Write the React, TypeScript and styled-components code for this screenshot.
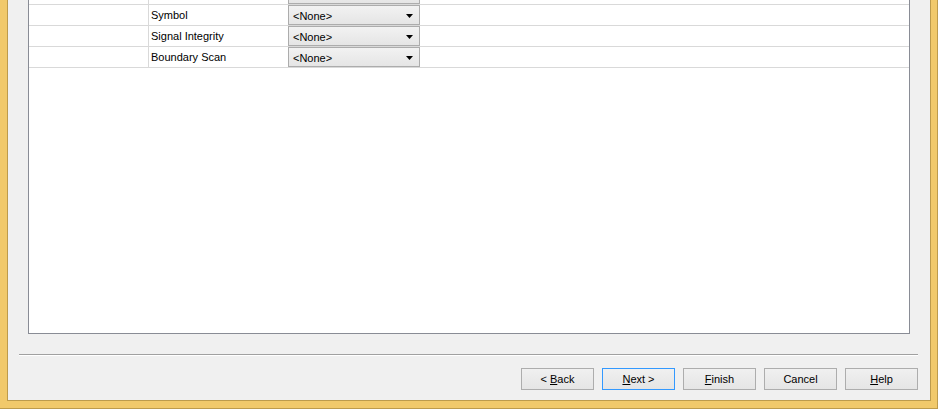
import React from "react";
import styled, { createGlobalStyle } from "styled-components";

const Global = createGlobalStyle`
  html, body { margin: 0; padding: 0; background: #f1c96b; }
  body { font-family: "Liberation Sans", Arial, sans-serif; font-size: 11px; color: #000; }
  * { box-sizing: border-box; }
`;

const Frame = styled.div`
  width: 938px;
  height: 409px;
  background: #f1c96b;
  border-right: 1px solid #bd9b4c;
  border-bottom: 1px solid #bd9b4c;
  padding: 0 6px 7px 7px;
`;

const Window = styled.div`
  width: 100%;
  height: 100%;
  background: #f0f0f0;
  border-left: 1px solid #bd9b4c;
  border-right: 1px solid #bd9b4c;
  border-bottom: 1px solid #bd9b4c;
  display: flex;
  flex-direction: column;
  overflow: hidden;
`;

const Panel = styled.div`
  margin: -17px 20px 0 20px;
  height: 351px;
  flex: none;
  background: #fff;
  border: 1px solid #898c95;
  display: flex;
  flex-direction: column;
`;

const Row = styled.div`
  display: flex;
  height: 21px;
  border-bottom: 1px solid #d9d9d9;
`;

const KeyCell = styled.div`
  width: 120px;
  border-right: 1px solid #d9d9d9;
`;

const NameCell = styled.div`
  width: 139px;
  padding-left: 2px;
  line-height: 21px;
  white-space: nowrap;
`;

const ValueCell = styled.div`
  flex: 1;
`;

const Combo = styled.div`
  width: 132px;
  height: 20px;
  border: 1px solid #acacac;
  background: linear-gradient(#f2f2f2, #e5e5e5);
  display: flex;
  align-items: center;
  justify-content: space-between;
  padding: 1px 6px 0 4px;
  line-height: 18px;
`;

const Separator = styled.div`
  margin: 20px 12px 0 11px;
  height: 2px;
  border-top: 1px solid #a0a0a0;
  border-bottom: 1px solid #ffffff;
  flex: none;
`;

const ButtonBar = styled.div`
  margin: 12px 12px 0 0;
  display: flex;
  justify-content: flex-end;
  gap: 8px;
  flex: none;
`;

const Button = styled.div<{ $default?: boolean }>`
  width: 73px;
  height: 22px;
  border: 1px solid ${(p) => (p.$default ? "#3399ff" : "#adadad")};
  background: linear-gradient(#f0f0f0, #e5e5e5);
  display: flex;
  align-items: center;
  justify-content: center;
  font-size: 11px;
`;

const Arrow = () => (
  <svg width="7" height="4" viewBox="0 0 7 4">
    <polygon points="0,0 7,0 3.5,4" fill="#000" />
  </svg>
);

const rows = ["Layout", "Symbol", "Signal Integrity", "Boundary Scan"];

export default function App() {
  return (
    <>
      <Global />
      <Frame>
        <Window>
          <Panel>
            {rows.map((r) => (
              <Row key={r}>
                <KeyCell />
                <NameCell>{r}</NameCell>
                <ValueCell>
                  <Combo>
                    <span>&lt;None&gt;</span>
                    <Arrow />
                  </Combo>
                </ValueCell>
              </Row>
            ))}
          </Panel>
          <Separator />
          <ButtonBar>
            <Button>
              <span>
                &lt; <u>B</u>ack
              </span>
            </Button>
            <Button $default>
              <span>
                <u>N</u>ext &gt;
              </span>
            </Button>
            <Button>
              <span>
                <u>F</u>inish
              </span>
            </Button>
            <Button>
              <span>Cancel</span>
            </Button>
            <Button>
              <span>
                <u>H</u>elp
              </span>
            </Button>
          </ButtonBar>
        </Window>
      </Frame>
    </>
  );
}
